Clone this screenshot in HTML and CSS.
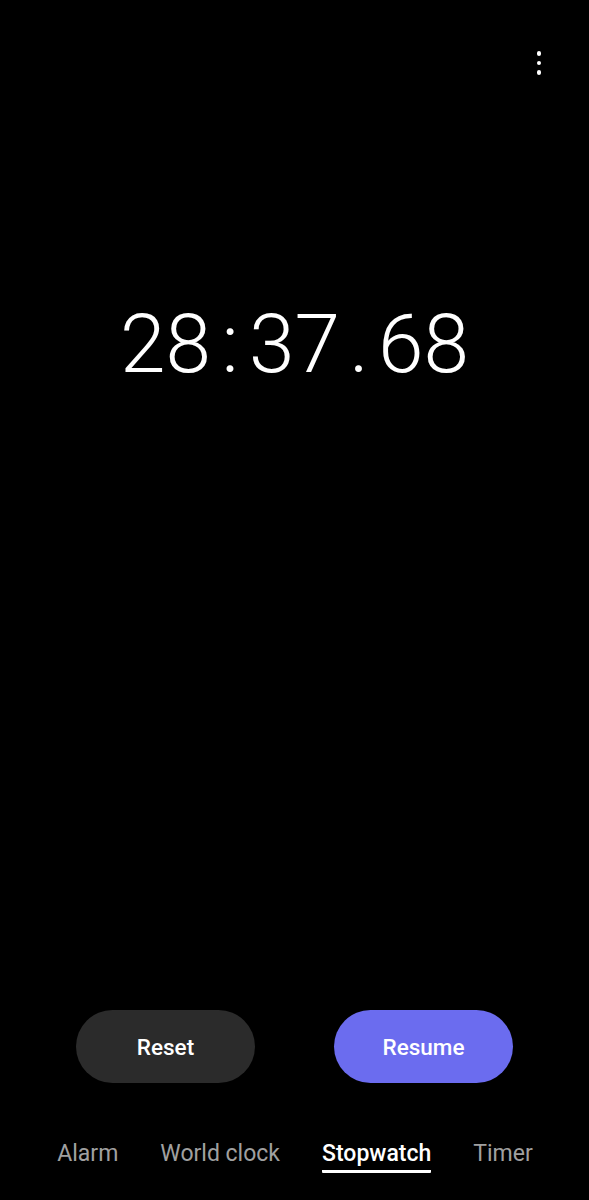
FILE: index.html
```html
<!DOCTYPE html>
<html>
<head>
<meta charset="utf-8">
<link rel="stylesheet" href="styles.css">
</head>
<body>
<div class="app">
  <header class="topbar">
    <button class="menu" aria-label="More options">
      <span class="dot"></span><span class="dot"></span><span class="dot"></span>
    </button>
  </header>
  <main class="main">
    <div class="time">
      <span class="grp">28</span><span class="sep">:</span><span class="grp">37</span><span class="sep">.</span><span class="grp">68</span>
    </div>
  </main>
  <div class="actions">
    <button class="btn btn-reset">Reset</button>
    <button class="btn btn-resume">Resume</button>
  </div>
  <nav class="tabs">
    <span class="tab">Alarm</span>
    <span class="tab">World clock</span>
    <span class="tab active">Stopwatch</span>
    <span class="tab">Timer</span>
  </nav>
</div>
</body>
</html>
```
FILE: styles.css
```css
* { box-sizing: border-box; }
html, body { margin: 0; padding: 0; background: #000; }
body { font-family: Roboto, "Noto Sans", "Liberation Sans", sans-serif; color: #fff; }
.app { width: 589px; height: 1200px; display: flex; flex-direction: column; }
.topbar { height: 100px; display: flex; justify-content: flex-end; align-items: flex-start; padding: 51px 48px 0 0; }
.menu { background: none; border: 0; padding: 0; width: 4.5px; display: flex; flex-direction: column; gap: 5px; }
.dot { width: 4.5px; height: 4.5px; border-radius: 50%; background: #fff; display: block; }
.main { flex: 1; }
.time { margin-top: 203px; display: flex; justify-content: center; font-weight: 300; font-size: 82px; line-height: 1; }
.grp { display: inline-block; }
.sep { display: inline-block; width: 38px; text-align: center; }
.actions { display: flex; justify-content: center; gap: 79px; }
.btn { width: 179px; height: 73px; border: 0; border-radius: 37px; font-family: inherit; font-size: 22.5px; font-weight: 500; color: #fff; }
.btn-reset { background: #2b2b2b; }
.btn-resume { background: #6b6cef; }
.tabs { height: 117px; display: flex; justify-content: center; gap: 42px; padding-top: 56px; padding-left: 1px; }
.tab { font-size: 23px; color: #a0a0a0; line-height: 29px; height: 34px; }
.active { color: #fff; font-weight: 500; border-bottom: 3px solid #fff; border-radius: 1px; }
```
